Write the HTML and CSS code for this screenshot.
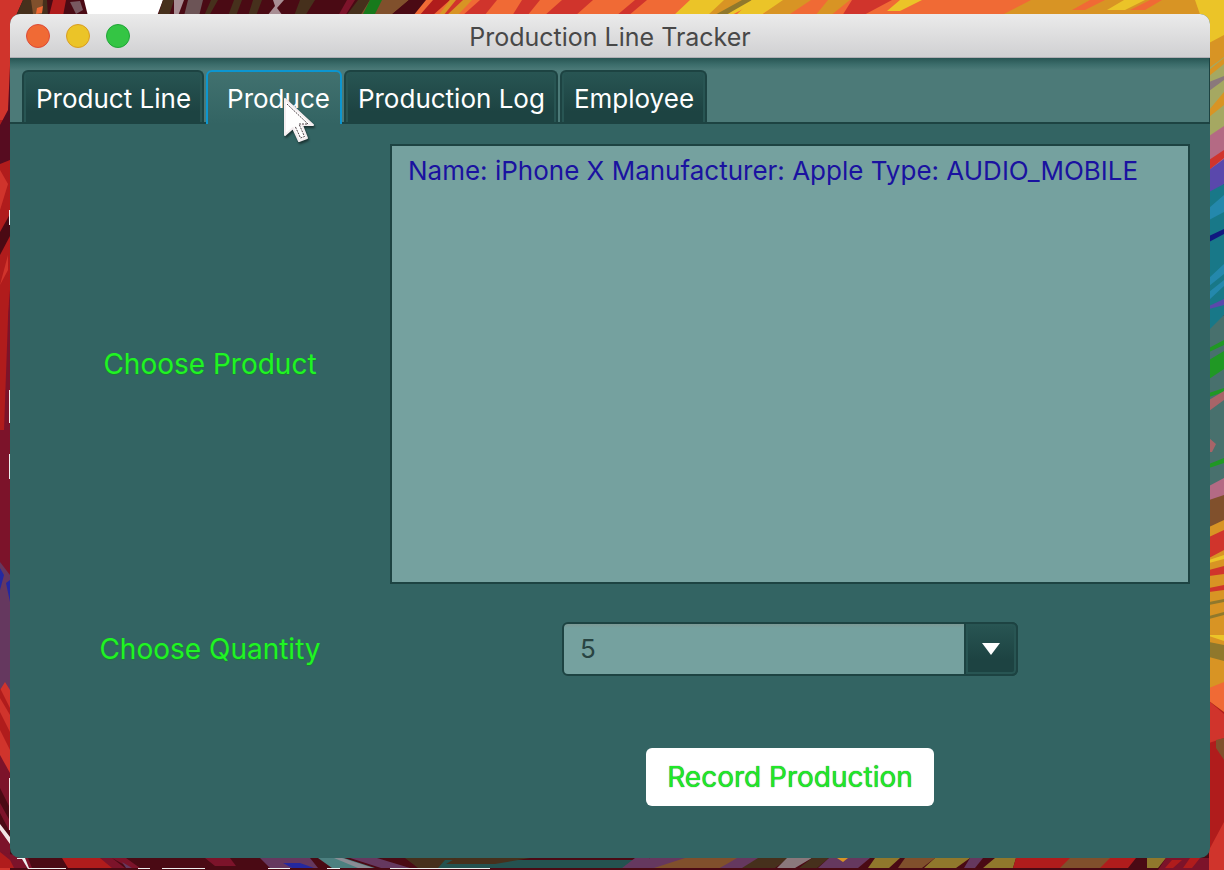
FILE: index.html
```html
<!DOCTYPE html>
<html lang="en">
<head>
<meta charset="utf-8">
<title>Production Line Tracker</title>
<link rel="stylesheet" href="styles.css">
</head>
<body class="desktop">
<svg class="wallpaper" viewBox="0 0 1224 870" preserveAspectRatio="none" aria-hidden="true">
  <rect width="1224" height="870" fill="#4a0a14"/>
  <!-- top edge -->
  <path d="M0 0H23L14 20V80H0Z" fill="#d0342c"/>
  <path d="M23 0H47L48 16H16Z" fill="#46301c"/>
  <path d="M31 0H43L42 14H33Z" fill="#80502c"/>
  <path d="M37 8L43 6L42 13L36 14Z" fill="#f06a35"/>
  <path d="M53 0H66L63 16H49Z" fill="#b01c1c"/>
  <path d="M84 0H163L157 16H88Z" fill="#fff"/>
  <path d="M70 2L80 1L83 10L76 14Z" fill="#785860"/>
  <path d="M163 0H174L169 16H158Z" fill="#46301c"/>
  <path d="M174 0L184 0L178 16H174Z" fill="#a88e94"/>
  <path d="M188 0H203L199 16H184Z" fill="#6c5456"/>
  <path d="M211 0H218L209 16H204ZM234 0H242L236 16H228ZM253 0H262L256 16H248Z" fill="#46301c"/>
  <path d="M273 0H284L277 8L283 16H267L275 6Z" fill="#a88e94"/>
  <path d="M300 0H315L305 16H294Z" fill="#46301c"/>
  <path d="M347 0H355L345 16H338Z" fill="#7c132a"/>
  <path d="M363 0H409L390 16H350Z" fill="#80502c"/>
  <path d="M358 0H370L360 16H346Z" fill="#46301c"/>
  <path d="M370 0H382L374 16H362Z" fill="#177a1c"/>
  <path d="M409 0H426L413 16H390Z" fill="#4a0a14"/>
  <path d="M426 0H1224V16H413Z" fill="#f06a35"/>
  <path d="M433 0H450L432 16H419Z" fill="#b01c1c"/>
  <path d="M450 0H472L457 16H438Z" fill="#d89424"/>
  <path d="M456 0H463L446 16H443Z" fill="#d0342c"/>
  <path d="M480 0H497L484 16H462ZM522 0H540L527 16H512ZM562 0H593L575 16H544ZM635 0H647L628 16H616ZM852 0H892L862 16H842Z" fill="#d0342c"/>
  <path d="M690 0H760L730 16H673Z" fill="#ebc428"/>
  <path d="M724 0H747L725 16H707ZM781 0H811L787 16H761ZM828 0H850L830 16H815Z" fill="#d89424"/>
  <path d="M742 0H752L724 16H713Z" fill="#90782c"/>
  <path d="M752 0H783L760 16H735ZM900 0H922L900 11H887Z" fill="#ebc428"/>
  <path d="M1031 0H1224V16H1000Z" fill="#d89424"/>
  <path d="M1090 0H1105L1085 10H1072ZM1150 0H1162L1145 10H1130Z" fill="#f06a35"/>
  <path d="M1124 0H1145L1125 10H1107Z" fill="#ebc428"/>
  <!-- left edge -->
  <path d="M0 20H12V405H0Z" fill="#b01c1c"/>
  <path d="M0 0H12V60L8 120H0Z" fill="#d0342c"/>
  <path d="M10 66V160L0 164V125L8 110Z" fill="#560c20"/>
  <path d="M0 170V210L8 184ZM0 285L8 255V270Z" fill="#d0342c"/>
  <path d="M10 214V236L0 255V232Z" fill="#4a0a14"/>
  <path d="M0 400L10 290V560H0Z" fill="#7c132a"/>
  <path d="M0 290L9 290L4 430H0Z" fill="#b01c1c"/>
  <path d="M9 210H11V225H9ZM9 390H11V423H9ZM9 454H11V479H9Z" fill="#eee"/>
  <path d="M0 550H12V690H0Z" fill="#65385f"/>
  <path d="M0 550H10V575L0 562Z" fill="#7c132a"/>
  <path d="M10 580V602L6 583ZM0 568L4 575L0 590Z" fill="#2428a0"/>
  <path d="M0 690L5 682L10 690V870H0Z" fill="#d0342c"/>
  <path d="M0 688L10 708V715L0 698ZM0 712L10 732V750L0 730Z" fill="#b01c1c"/>
  <path d="M0 755L10 773V858H0Z" fill="#7c132a"/>
  <path d="M0 788L10 808V821L0 803ZM0 813L10 832V840L0 825Z" fill="#4a0a14"/>
  <path d="M0 824L10 837V844L0 830ZM9 778H11V830H9Z" fill="#f2e4e4"/>
  <path d="M0 852L28 858L32 868H0Z" fill="#7c132a"/>
  <path d="M0 852L10 860L14 868H0Z" fill="#b01c1c"/>
  <!-- bottom edge -->
  <path d="M62 858H110L122 868H68Z" fill="#b01c1c"/>
  <path d="M100 858H112L125 868H112ZM112 858H126L140 868H130ZM205 858H230L236 866H215Z" fill="#7c132a"/>
  <path d="M122 862L132 868H126ZM260 858H310L318 868H270Z" fill="#65385f"/>
  <path d="M283 863H300L314 868H292Z" fill="#2428a0"/>
  <path d="M318 858H344L375 868H332Z" fill="#4c8080"/>
  <path d="M334 858H342L373 868H358Z" fill="#8a8c94"/>
  <path d="M350 858H377L410 868H381Z" fill="#65385f"/>
  <path d="M405 858H460L440 868H418Z" fill="#46301c"/>
  <path d="M445 860H639L624 868H438Z" fill="#245250"/>
  <path d="M456 858H530L495 864H446Z" fill="#46301c"/>
  <path d="M635 858H650L640 868H622ZM720 858H770L745 868H704Z" fill="#65385f"/>
  <path d="M650 858H690L660 868H630Z" fill="#65385f"/>
  <path d="M685 858H740L720 868H654Z" fill="#80502c"/>
  <path d="M737 858H758L750 868H720Z" fill="#65385f"/>
  <path d="M758 858H789L775 868H742Z" fill="#46301c"/>
  <path d="M787 858H812L795 868H777Z" fill="#8a787c"/>
  <path d="M812 858H829L817 868H799Z" fill="#46301c"/>
  <path d="M829 858H870L858 868H818Z" fill="#65385f"/>
  <path d="M837 858H848L843 862Z" fill="#d89424"/>
  <path d="M875 858H900L889 868H868ZM935 858H970L956 868H924ZM995 858H1016L1013 868H983Z" fill="#90782c"/>
  <path d="M905 858H935L922 868H898Z" fill="#80502c"/>
  <path d="M970 858H983L975 868H964Z" fill="#65385f"/>
  <path d="M1016 858H1136L1128 868H1013Z" fill="#b01c1c"/>
  <path d="M1070 858H1110L1100 868H1060Z" fill="#80502c"/>
  <path d="M1147 858H1166L1158 868H1147Z" fill="#90782c"/>
  <path d="M1166 858H1224V870H1158Z" fill="#7c132a"/>
  <path d="M1172 860H1182L1173 868H1165ZM1190 858H1200L1192 868H1183Z" fill="#b01c1c"/>
  <path d="M17 858H25L29 868H66V869H28L22 859H17ZM138 868H150V869H138ZM162 868H205V869H162ZM268 868H290V869H268ZM327 868H340V869H327ZM390 868H490V869H390Z" fill="#eee"/>
  <!-- right edge -->
  <path d="M1195 0H1224V45L1210 43Z" fill="#ebc428"/>
  <path d="M1209 43L1224 35V70L1209 78Z" fill="#d89424"/>
  <path d="M1209 68L1224 57V132L1209 142Z" fill="#a5a862"/>
  <path d="M1209 110L1224 92V105L1209 117ZM1209 70L1224 58V64L1209 76Z" fill="#d89424"/>
  <path d="M1209 82L1224 76V80L1209 91Z" fill="#8a787c"/>
  <path d="M1209 136L1224 126V160L1209 172Z" fill="#b46a84"/>
  <path d="M1209 160L1224 150V158L1209 170Z" fill="#d0342c"/>
  <path d="M1209 170L1224 159V184L1209 210Z" fill="#5a48ac"/>
  <path d="M1209 192L1224 184V315L1209 340Z" fill="#187888"/>
  <path d="M1209 208L1224 195V212L1209 220ZM1209 278L1224 264V274L1209 286ZM1209 292L1224 280V286L1209 300Z" fill="#2488ac"/>
  <path d="M1209 236L1224 229V234L1209 242Z" fill="#101880"/>
  <path d="M1209 306L1224 299V305L1209 309Z" fill="#5a48ac"/>
  <path d="M1209 330L1224 315V485L1209 495Z" fill="#48706d"/>
  <path d="M1209 348L1224 340V345L1209 352ZM1209 360L1224 351V369L1209 379ZM1209 393L1224 388V392L1209 397ZM1209 464L1224 458V463L1209 468Z" fill="#209824"/>
  <path d="M1209 400L1224 391V400L1209 411ZM1209 438L1216 444L1212 452H1209Z" fill="#a86468"/>
  <path d="M1209 486L1224 478V502L1209 505Z" fill="#b46a84"/>
  <path d="M1209 500L1224 495V530L1209 545Z" fill="#80502c"/>
  <path d="M1209 527L1224 520V810H1209Z" fill="#d89424"/>
  <path d="M1209 537L1224 530V550L1209 558ZM1209 570L1224 566V574L1209 576ZM1209 588L1224 585V590L1209 592Z" fill="#d0342c"/>
  <path d="M1209 560L1224 555V559L1209 563ZM1209 635H1224V641L1209 636Z" fill="#ebc428"/>
  <path d="M1209 602L1224 599V602L1209 605ZM1209 616L1224 612V615L1209 619ZM1209 642L1224 645V661L1209 657Z" fill="#90782c"/>
  <path d="M1209 688L1224 682V712L1209 701Z" fill="#f06a35"/>
  <path d="M1209 701L1224 712V870H1209Z" fill="#b01c1c"/>
  <path d="M1209 701L1224 714V738L1209 743ZM1224 822V870H1209V850Z" fill="#d0342c"/>
  <path d="M1216 740L1224 738V760L1216 748Z" fill="#80502c"/>
</svg>

<main class="window">
  <header class="titlebar">
    <div class="lights">
      <button class="light close" type="button" aria-label="Close"></button>
      <button class="light minimize" type="button" aria-label="Minimize"></button>
      <button class="light maximize" type="button" aria-label="Maximize"></button>
    </div>
    <h1 class="title">Production Line Tracker</h1>
  </header>

  <nav class="tabs" role="tablist">
    <button class="tab" type="button" role="tab" aria-selected="false">Product Line</button>
    <button class="tab active" type="button" role="tab" aria-selected="true">Produce
      <svg class="pointer" width="36" height="52" viewBox="0 0 36 52" aria-hidden="true">
        <path class="pointer-edge" d="M3 4V40L11 33L17 46L25 43L20 30H31Z"/>
        <path class="pointer-line" d="M5 9L26 29H17L22.500 41.500L18.500 43L13 31"/>
      </svg>
    </button>
    <button class="tab" type="button" role="tab" aria-selected="false">Production Log</button>
    <button class="tab" type="button" role="tab" aria-selected="false">Employee</button>
  </nav>

  <form class="panel">
    <span class="label" id="product-label">Choose Product</span>
    <ul class="list" role="listbox" aria-labelledby="product-label">
      <li class="item" role="option">Name: iPhone X Manufacturer: Apple Type: AUDIO_MOBILE</li>
    </ul>
    <label class="label" for="quantity">Choose Quantity</label>
    <div class="combo">
      <select class="combo-select" id="quantity">
        <option>1</option><option>2</option><option>3</option><option>4</option><option selected>5</option>
      </select>
      <span class="combo-arrow"><svg width="18" height="12" viewBox="0 0 18 12" aria-hidden="true"><path d="M0 0H18L9 12Z" fill="#fff"/></svg></span>
    </div>
    <button class="record" type="button">Record Production</button>
  </form>
</main>
</body>
</html>
```

FILE: styles.css
```css
* { box-sizing: border-box; }

.desktop {
  margin: 0;
  min-height: 100vh;
  padding: 14px 14px 12px 10px;
  display: flex;
  position: relative;
  font-family: Inter, "Liberation Sans", sans-serif;
  font-size: 26px;
  line-height: 32px;
}

.wallpaper {
  position: absolute;
  inset: 0;
  width: 100%;
  height: 100%;
}

.window {
  position: relative;
  flex: 1;
  display: flex;
  flex-direction: column;
  border-radius: 10px;
  overflow: hidden;
  background: #336463;
}

.titlebar {
  display: grid;
  grid-template-columns: 1fr auto 1fr;
  align-items: center;
  height: 44px;
  padding: 0 16px;
  background: linear-gradient(#ebebeb, #d0d0d2);
  border-bottom: 1px solid #b0aeb4;
}

.lights { display: flex; gap: 16px; }

.light {
  width: 24px;
  height: 24px;
  padding: 0;
  border-radius: 50%;
  border: 1px solid;
}

.close { background: #f06a35; border-color: #dc4a38; }
.minimize { background: #ebc428; border-color: #d89c24; }
.maximize { background: #34c544; border-color: #20a438; }

.title {
  margin: 0;
  padding-top: 2px;
  font-size: 25px;
  font-weight: 400;
  color: #484848;
}

.tabs {
  display: flex;
  gap: 2px;
  height: 66px;
  padding: 12px 12px 0;
  background: linear-gradient(#285553, #3a6b69 6px, #4c7a78 12px, #4c7a78);
  border: solid #1d4342;
  border-width: 0 1px 2px 0;
}

.tab {
  position: relative;
  height: 52px;
  padding: 4px 11px 0 12px;
  font: inherit;
  color: #fff;
  white-space: nowrap;
  background: linear-gradient(#285553, #1d4342 80%);
  border: 2px solid #1d4342;
  border-bottom: 0;
  border-radius: 6px 6px 0 0;
  box-shadow: inset 2px 1px #285553, inset -2px 0 #285553;
}

.tab.active {
  height: 54px;
  padding: 2px 10px 0 19px;
  background: linear-gradient(#41716f, #336463);
  border-color: #0c96d0;
  box-shadow: none;
}

.pointer {
  position: absolute;
  left: 74px;
  top: 23px;
  z-index: 1;
  filter: drop-shadow(1px 2px 1px rgba(0, 0, 0, 0.5));
}

.pointer-edge { fill: #fff; stroke: #f4eef0; stroke-width: 2; stroke-linejoin: round; }
.pointer-line { fill: none; stroke: #504448; stroke-width: 1; stroke-dasharray: 2 1; }

.panel {
  flex: 1;
  display: grid;
  grid-template-columns: 9fr 20fr;
  grid-template-rows: 1fr auto auto;
  align-items: center;
  justify-items: center;
  padding: 20px 20px 52px;
}

.label {
  font-size: 28px;
  color: #20f424;
  text-shadow: 0 1px 1px #1a8030;
}

.list {
  align-self: stretch;
  justify-self: stretch;
  margin: 0;
  padding: 9px 16px;
  list-style: none;
  background: #75a19f;
  border: 2px solid #1d4342;
}

.item { color: #1a12a0; }

.combo {
  position: relative;
  display: grid;
  width: 57%;
  height: 54px;
  margin: 38px 0 72px;
}

.combo + .record { grid-column: 2; }

.label[for] { margin: 38px 0 72px; }

.combo-select {
  appearance: none;
  width: 100%;
  padding: 0 64px 0 16px;
  font: inherit;
  color: #284442;
  background: linear-gradient(#7c9894, #75a19f 4px);
  border: 2px solid #1d4342;
  border-radius: 6px;
}

.combo-arrow {
  position: absolute;
  top: 0;
  right: 0;
  bottom: 0;
  width: 54px;
  display: grid;
  place-items: center;
  background: linear-gradient(#285553, #1d4342 70%);
  border: 2px solid #1d4342;
  border-radius: 0 6px 6px 0;
  box-shadow: inset 0 0 0 2px #285553;
  pointer-events: none;
}

.record {
  height: 58px;
  padding: 0 21px;
  font: inherit;
  font-size: 28px;
  color: #20e828;
  text-shadow: 0 0 1px #106818;
  background: #fff;
  border: 0;
  border-radius: 6px;
}
```
